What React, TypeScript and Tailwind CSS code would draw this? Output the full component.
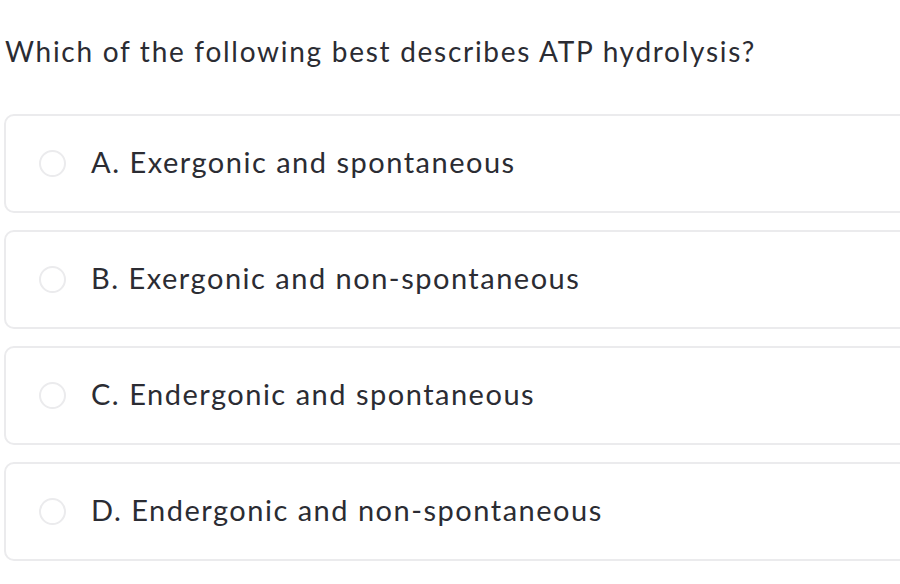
const options = [
  "A. Exergonic and spontaneous",
  "B. Exergonic and non-spontaneous",
  "C. Endergonic and spontaneous",
  "D. Endergonic and non-spontaneous",
];

export default function App() {
  return (
    <div className="w-[900px] h-[584px] overflow-hidden bg-white font-['Lato',sans-serif] text-[#2b2c33]">
      <div className="pl-[5px] pt-[33px] text-[28px] leading-[36px] tracking-[1.72px]">
        Which of the following best describes ATP hydrolysis?
      </div>
      <div className="flex flex-col gap-[17px] pl-[4px] pt-[45px] -mr-[20px]">
        {options.map((opt) => (
          <div
            key={opt}
            className="flex h-[99px] items-center rounded-[10px] border-2 border-[#ebebed] pl-[33px]"
          >
            <span className="h-[27px] w-[27px] shrink-0 rounded-full border-2 border-[#ebebed]" />
            <span className="pl-[25px] pb-[3px] text-[29px] leading-[36px] tracking-[1.5px]">{opt}</span>
          </div>
        ))}
      </div>
    </div>
  );
}
